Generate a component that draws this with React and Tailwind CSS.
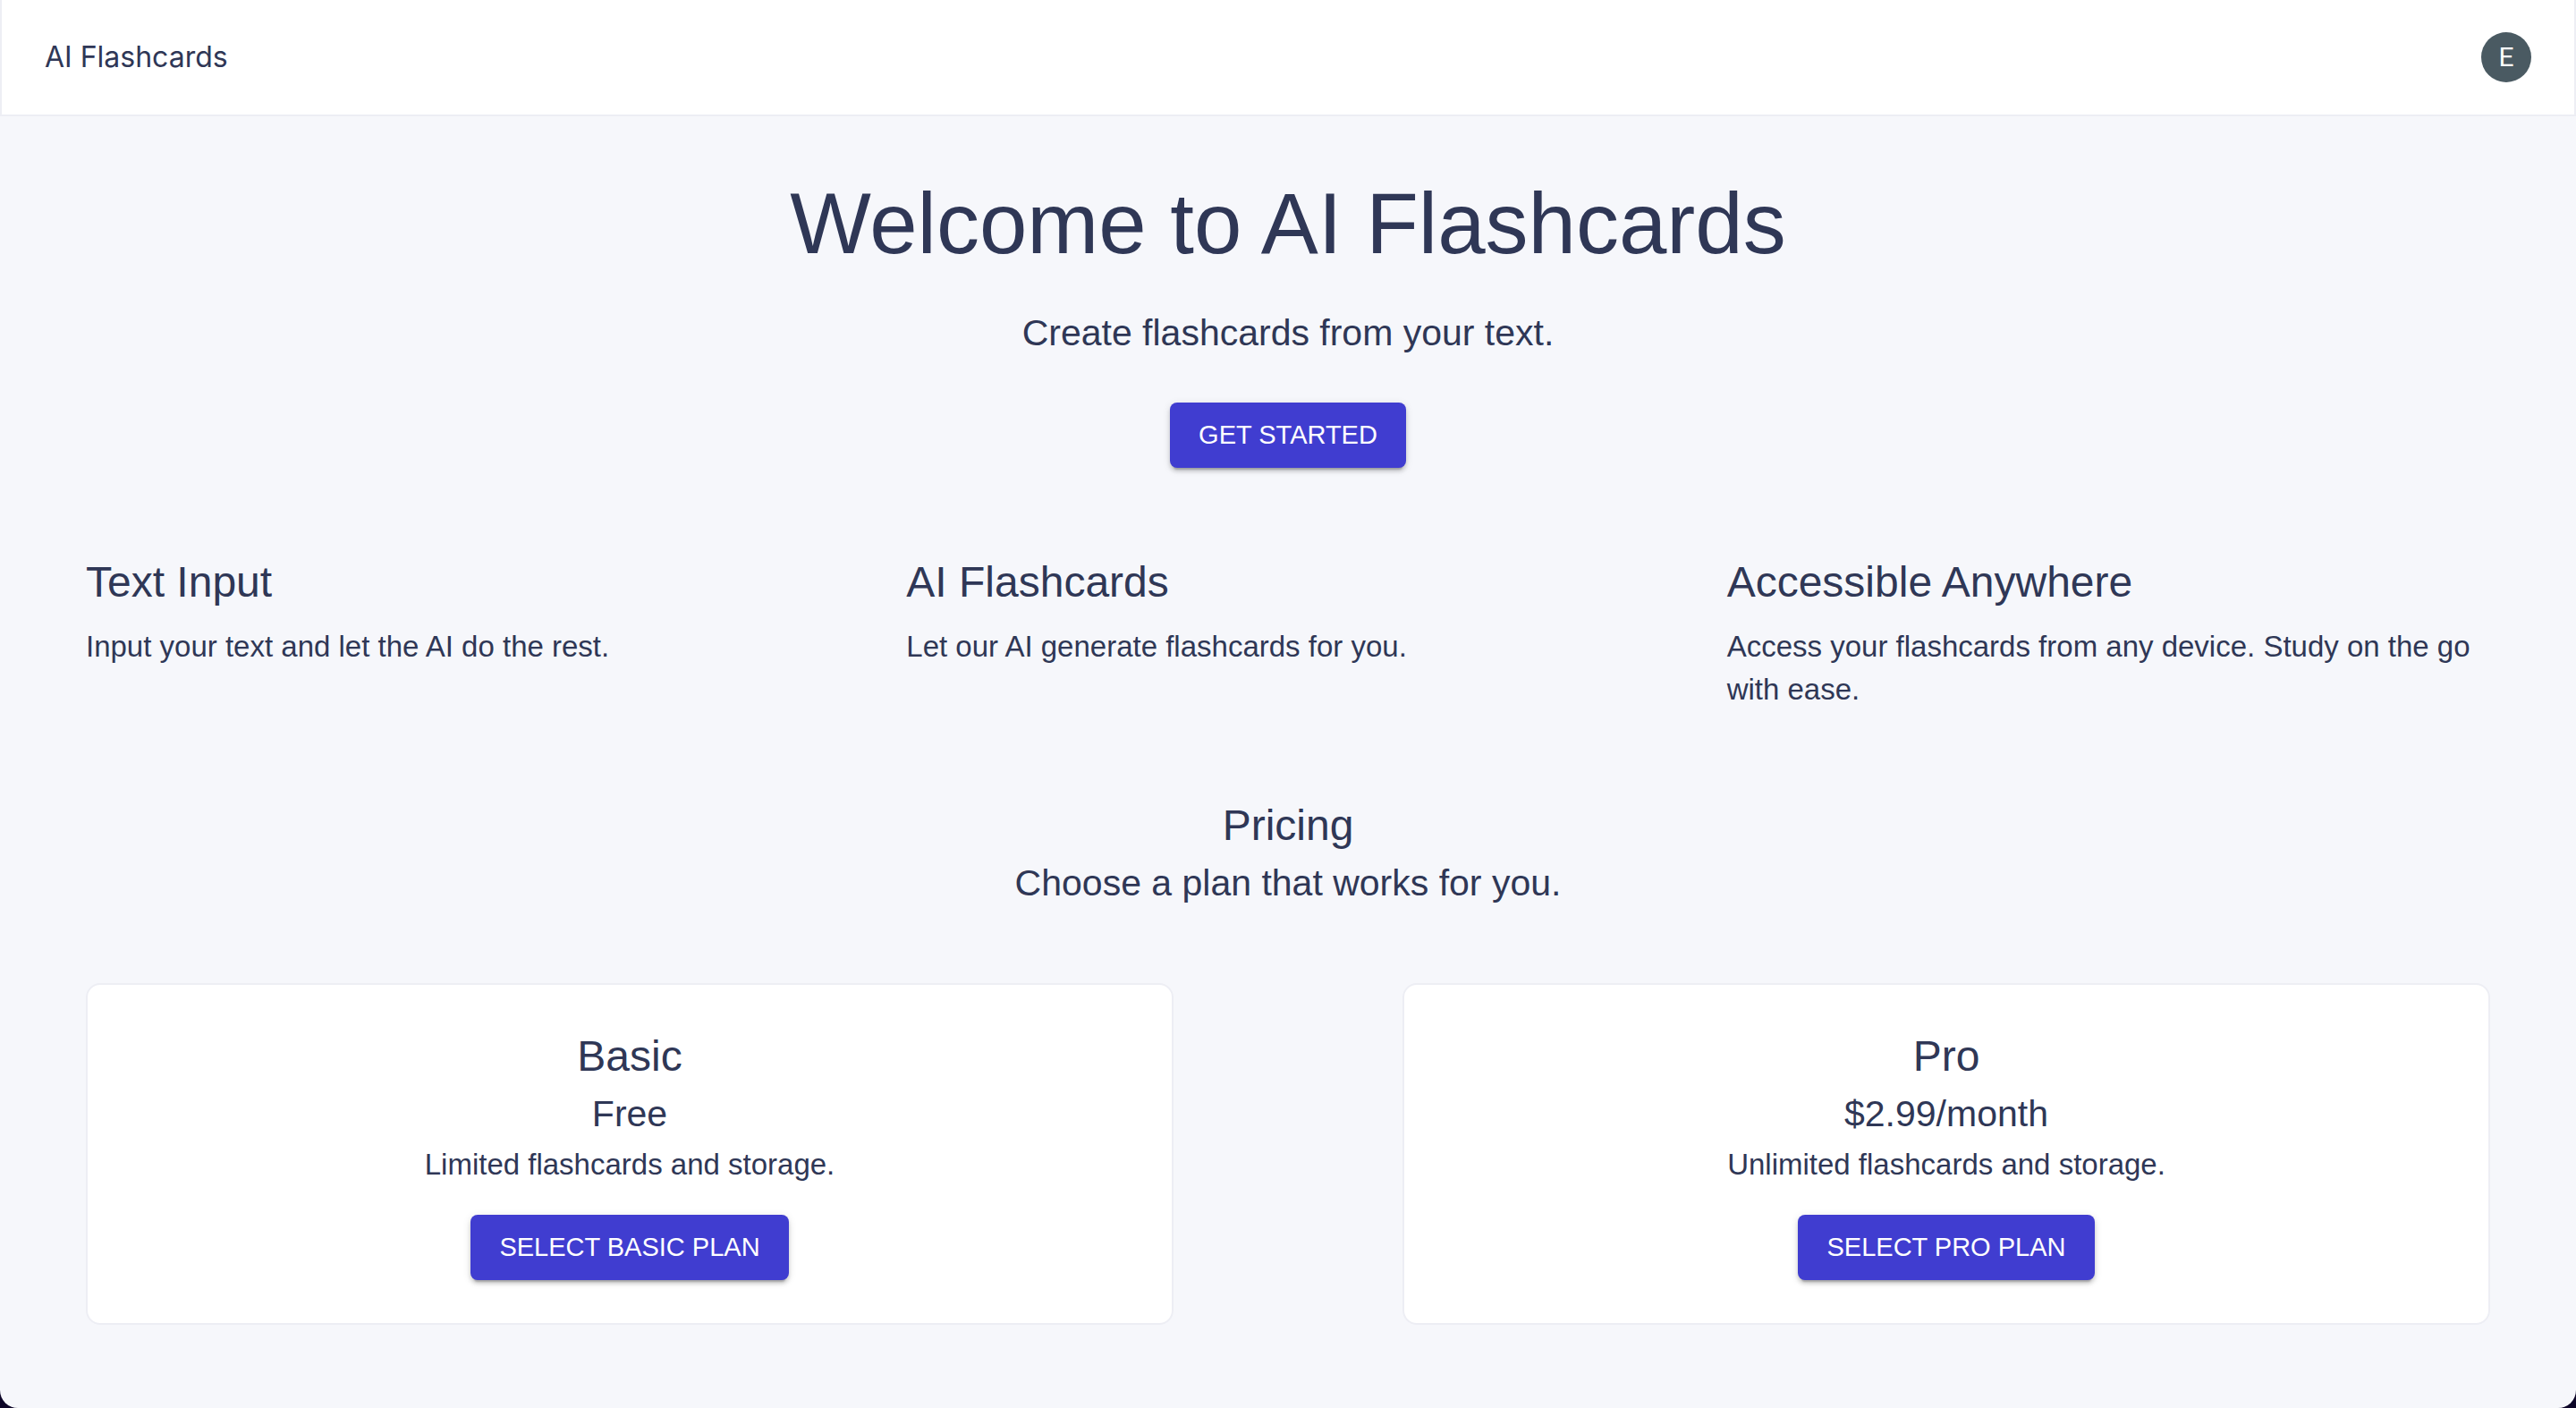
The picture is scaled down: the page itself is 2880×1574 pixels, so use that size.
const features = [
  { title: "Text Input", text: "Input your text and let the AI do the rest." },
  { title: "AI Flashcards", text: "Let our AI generate flashcards for you." },
  {
    title: "Accessible Anywhere",
    text: "Access your flashcards from any device. Study on the go with ease.",
  },
];

const plans = [
  { name: "Basic", price: "Free", text: "Limited flashcards and storage.", action: "Select Basic Plan" },
  { name: "Pro", price: "$2.99/month", text: "Unlimited flashcards and storage.", action: "Select Pro Plan" },
];

function Button({ children }) {
  return (
    <button
      type="button"
      className="rounded-lg bg-[#403dd0] px-8 py-3 text-[29px] leading-[49px] text-white uppercase shadow-[0_6px_2px_-4px_rgba(0,0,0,0.2),0_4px_4px_rgba(0,0,0,0.14),0_2px_10px_rgba(0,0,0,0.12)]"
    >
      {children}
    </button>
  );
}

export default function App() {
  return (
    <div className="min-h-screen bg-[#0d0628]">
      <div className="min-h-screen rounded-b-[20px] bg-[#f6f7fb] font-['Liberation_Sans',Arial,sans-serif] text-[#2f3756]">
        <header className="flex items-center justify-between border-2 border-t-0 border-[#edeef4] bg-white px-12 py-9 font-['Inter',sans-serif]">
          <span className="text-[32px] leading-[56px]">AI Flashcards</span>
          <button
            type="button"
            aria-label="Account"
            className="flex size-14 items-center justify-center rounded-full bg-[#4a5a62] font-['Roboto',sans-serif] text-[30px] leading-none text-white"
          >
            E
          </button>
        </header>

        <main className="px-24 pt-[62px] pb-[92px]">
          <section className="flex flex-col items-center text-center">
            <h1 className="text-8xl leading-[116px]">Welcome to AI Flashcards</h1>
            <p className="mt-8 mb-[45px] text-[41px] leading-[65px]">Create flashcards from your text.</p>
            <Button>Get Started</Button>
          </section>

          <section className="mt-24 grid grid-cols-3 gap-16">
            {features.map((f) => (
              <div key={f.title}>
                <h2 className="mb-4 text-5xl leading-[64px]">{f.title}</h2>
                <p className="text-[33px] leading-[48px]">{f.text}</p>
              </div>
            ))}
          </section>

          <section className="mt-24 text-center">
            <h2 className="text-5xl leading-[64px]">Pricing</h2>
            <p className="text-[41px] leading-[65px]">Choose a plan that works for you.</p>
            <div className="mt-[79px] grid grid-cols-2 gap-64">
              {plans.map((p) => (
                <article
                  key={p.name}
                  className="flex flex-col items-center rounded-2xl border-2 border-[#edeef4] bg-white p-12"
                >
                  <h3 className="text-5xl leading-[64px]">{p.name}</h3>
                  <p className="text-[41px] leading-[65px]">{p.price}</p>
                  <p className="mb-8 text-[33px] leading-[48px]">{p.text}</p>
                  <Button>{p.action}</Button>
                </article>
              ))}
            </div>
          </section>
        </main>
      </div>
    </div>
  );
}
